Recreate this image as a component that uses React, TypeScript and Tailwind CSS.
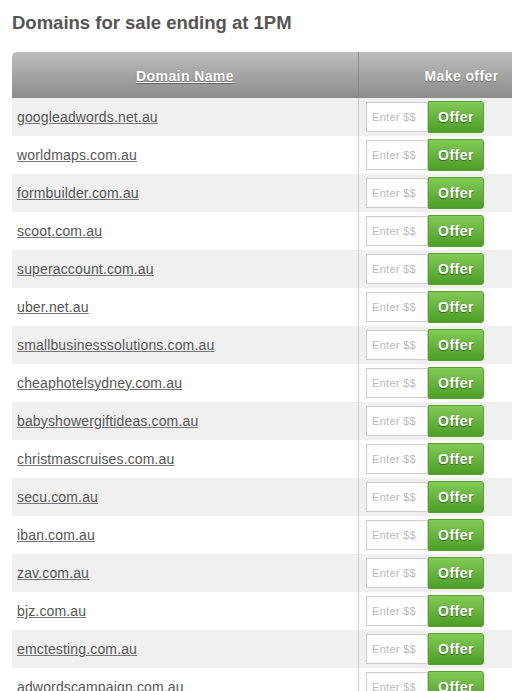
import React from 'react';

const domains = [
  'googleadwords.net.au',
  'worldmaps.com.au',
  'formbuilder.com.au',
  'scoot.com.au',
  'superaccount.com.au',
  'uber.net.au',
  'smallbusinesssolutions.com.au',
  'cheaphotelsydney.com.au',
  'babyshowergiftideas.com.au',
  'christmascruises.com.au',
  'secu.com.au',
  'iban.com.au',
  'zav.com.au',
  'bjz.com.au',
  'emctesting.com.au',
  'adwordscampaign.com.au',
];

function OfferRow({ domain, odd }: { domain: string; odd: boolean }) {
  return (
    <div className={`flex h-[38px] ${odd ? 'bg-[#f0f0f0]' : 'bg-white'}`}>
      <div className="flex w-[346px] shrink-0 items-center pl-[5px]">
        <a href="#" className="text-[14px] tracking-[0.15px] text-[#555] underline decoration-[#777]">
          {domain}
        </a>
      </div>
      <div className="flex w-[206px] shrink-0 items-center border-l border-[#ccc] pl-[7px]">
        <input
          placeholder="Enter $$"
          className="h-[30px] w-[62px] border border-[#ccc] bg-white px-[5px] text-[11px] tracking-[0.3px] text-[#555] outline-none placeholder:text-[#bbb]"
        />
        <button className="h-[32px] w-[56px] rounded-r-[3px] border border-[#5a9e34] bg-gradient-to-b from-[#82cb55] to-[#4c9e25] text-[14px] font-bold tracking-[0.5px] text-white [text-shadow:0_1px_1px_rgba(0,0,0,0.45)]">
          Offer
        </button>
      </div>
    </div>
  );
}

export default function App() {
  return (
    <div className="h-[691px] w-[512px] overflow-hidden bg-white font-['Liberation_Sans',Arial,sans-serif]">
      <h2 className="px-[12px] pt-[12px] text-[18.5px] leading-[22px] font-bold text-[#555]">
        Domains for sale ending at 1PM
      </h2>
      <div className="mt-[18px] ml-[12px] w-[552px]">
        <div className="flex h-[46px] rounded-tl-[5px] bg-gradient-to-b from-[#bdbdbd] to-[#8c8c8c] text-[14px] font-bold tracking-[0.4px] text-white [text-shadow:0_1px_1px_rgba(0,0,0,0.35)]">
          <div className="flex w-[346px] shrink-0 items-center justify-center pt-[2px]">
            <a href="#" className="underline">Domain Name</a>
          </div>
          <div className="flex w-[206px] shrink-0 items-center justify-center border-l border-[#8a8a8a] pt-[2px]">
            Make offer
          </div>
        </div>
        {domains.map((d, i) => (
          <OfferRow key={d} domain={d} odd={i % 2 === 0} />
        ))}
      </div>
    </div>
  );
}
